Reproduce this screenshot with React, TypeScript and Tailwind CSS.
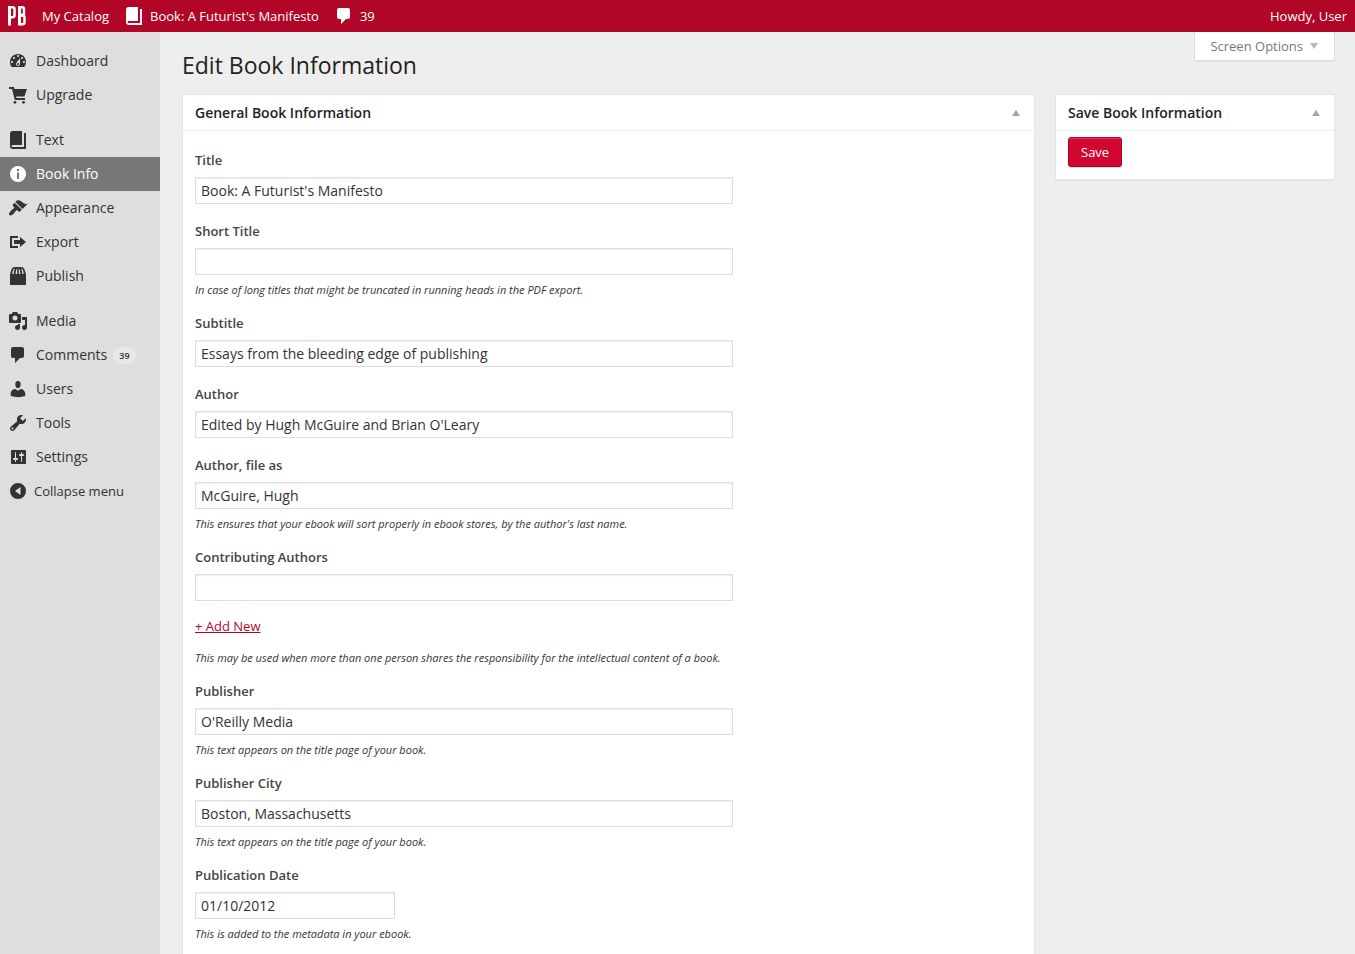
import { useId, useState, type ReactNode } from "react";

type IconProps = { children: ReactNode; className?: string };

function Icon({ children, className = "" }: IconProps) {
  return (
    <svg viewBox="0 0 20 20" className={`size-5 shrink-0 fill-current ${className}`} aria-hidden="true">
      {children}
    </svg>
  );
}

const icons = {
  dashboard: (
    <path
      fillRule="evenodd"
      d="M3.76 16h12.48c1.1-1.37 1.76-3.11 1.76-5 0-4.42-3.58-8-8-8s-8 3.58-8 8c0 1.89.66 3.63 1.76 5zM10 4c.55 0 1 .45 1 1s-.45 1-1 1-1-.45-1-1 .45-1 1-1zM6 6c.55 0 1 .45 1 1s-.45 1-1 1-1-.45-1-1 .45-1 1-1zm8 0c.55 0 1 .45 1 1s-.45 1-1 1-1-.45-1-1 .45-1 1-1zm-5.37 5.55L12 7v6c0 1.1-.9 2-2 2s-2-.9-2-2c0-.57.24-1.08.63-1.45zM4 10c.55 0 1 .45 1 1s-.45 1-1 1-1-.45-1-1 .45-1 1-1zm12 0c.55 0 1 .45 1 1s-.45 1-1 1-1-.45-1-1 .45-1 1-1zm-5 3c0-.55-.45-1-1-1s-1 .45-1 1 .45 1 1 1 1-.45 1-1z"
    />
  ),
  cart: (
    <>
      <path d="M1 2h4.800l.7 2H19l-2.600 7.500H8.100l.4 1.500H17v2H6.700L4.100 4H1z" />
      <circle cx="7" cy="17.300" r="1.400" />
      <circle cx="15.500" cy="17.300" r="1.400" />
    </>
  ),
  book: (
    <path d="M4.500 1H14v14H5c-.8 0-1.400.4-1.400 1s.6 1 1.400 1h11V3h2v16H5c-1.800 0-3-1.200-3-3V3.500C2 2 3 1 4.500 1z" />
  ),
  info: (
    <path
      fillRule="evenodd"
      d="M10 2a8 8 0 1 1 0 16 8 8 0 0 1 0-16zM9 5h2v2H9zM9 8.500h2V15H9z"
    />
  ),
  appearance: (
    <path d="M14.48 11.06L7.41 3.99l1.5-1.5c.5-.56 2.3-.47 3.51.32 1.21.8 1.43 1.28 2.91 2.1 1.18.64 2.45 1.26 4.45.85zm-.71.71L6.7 4.7 4.93 6.47c-.39.39-.39 1.02 0 1.41l1.06 1.06c.39.39.39 1.03 0 1.42-.6.6-1.43 1.11-2.21 1.69-.35.26-.7.53-1.01.84C1.43 14.23.4 16.08 1.4 17.07c.99 1 2.84-.03 4.18-1.36.31-.31.58-.66.85-1.02.57-.78 1.08-1.61 1.69-2.21.39-.39 1.02-.39 1.41 0l1.06 1.06c.39.39 1.02.39 1.41 0z" />
  ),
  export: (
    <>
      <path d="M2 4h8v2H4v8h6v2H2z" />
      <path d="M6 8h6V5l6 5-6 5v-3H6z" />
    </>
  ),
  publish: (
    <path
      fillRule="evenodd"
      d="M2 19V8.500l1-3.500c.6-2.600 1.700-4 4-4h6c2.300 0 3.400 1.400 4 4l1 3.500V19zM4.300 8h1.500c0-2.200.3-3.900 1.200-5.400C5.200 3 4.500 5 4.300 8zM7.600 8h1.600V2.600C8.200 3.500 7.700 5.500 7.600 8zM10.800 8h1.600c-.1-2.500-.6-4.500-1.600-5.400zM14.200 8h1.500c-.2-3-.9-5-2.700-5.400.9 1.500 1.200 3.200 1.200 5.400z"
    />
  ),
  media: (
    <path
      fillRule="evenodd"
      d="M13 11V4c0-.55-.45-1-1-1h-1.67L9 1H5L3.67 3H2c-.55 0-1 .45-1 1v7c0 .55.45 1 1 1h10c.55 0 1-.45 1-1zM7 4.5c1.38 0 2.5 1.12 2.5 2.5S8.38 9.5 7 9.5 4.5 8.38 4.5 7 5.62 4.5 7 4.5zM14 6h5v10.5c0 1.38-1.12 2.5-2.5 2.5S14 17.88 14 16.5s1.12-2.5 2.5-2.5c.17 0 .34.02.5.05V9h-3V6zm-4 8.05V13h2v3.5c0 1.38-1.12 2.5-2.5 2.5S7 17.88 7 16.5 8.12 14 9.5 14c.17 0 .34.02.5.05z"
    />
  ),
  comments: (
    <path d="M5 2h9c1.1 0 2 .9 2 2v7c0 1.1-.9 2-2 2h-2l-5 5v-5H5c-1.1 0-2-.9-2-2V4c0-1.1.9-2 2-2z" />
  ),
  users: (
    <path d="M10 9.25c-2.27 0-2.73-3.44-2.73-3.44C7 4.02 7.82 2 9.97 2c2.16 0 2.98 2.02 2.71 3.81 0 0-.41 3.44-2.68 3.44zm0 2.57L12.72 10c2.39 0 4.52 2.33 4.52 4.53v2.49s-3.65 1.13-7.24 1.13c-3.65 0-7.24-1.13-7.24-1.13v-2.49c0-2.25 1.94-4.48 4.47-4.48z" />
  ),
  tools: (
    <path
      fillRule="evenodd"
      d="M16.68 9.77c-1.34 1.34-3.3 1.67-4.95.99l-5.41 6.52c-.99.99-2.59.99-3.58 0s-.99-2.59 0-3.57l6.52-5.42c-.68-1.65-.35-3.61.99-4.95 1.28-1.28 3.12-1.62 4.72-1.06l-2.89 2.89 2.82 2.82 2.86-2.87c.53 1.58.18 3.39-1.08 4.65zM3.81 16.21c.4.39 1.04.39 1.43 0 .4-.4.4-1.04 0-1.43-.39-.4-1.03-.4-1.43 0-.39.39-.39 1.03 0 1.43z"
    />
  ),
  settings: (
    <path
      fillRule="evenodd"
      d="M4 3h13c.55 0 1 .45 1 1v12c0 .55-.45 1-1 1H4c-.55 0-1-.45-1-1V4c0-.55.45-1 1-1zM8 11h1c.55 0 1 .45 1 1s-.45 1-1 1H8v1.5c0 .28-.22.5-.5.5s-.5-.22-.5-.5V13H6c-.55 0-1-.45-1-1s.45-1 1-1h1V5.5c0-.28.22-.5.5-.5s.5.22.5.5V11zm5-2h-1c-.55 0-1-.45-1-1s.45-1 1-1h1V5.5c0-.28.22-.5.5-.5s.5.22.5.5V7h1c.55 0 1 .45 1 1s-.45 1-1 1h-1v5.5c0 .28-.22.5-.5.5s-.5-.22-.5-.5V9z"
    />
  ),
  collapse: (
    <path fillRule="evenodd" d="M10 2a8 8 0 1 1 0 16 8 8 0 0 1 0-16zM12.500 6v8l-5.500-4z" />
  ),
};

type IconName = keyof typeof icons;

const menuGroups: { label: string; icon: IconName; count?: number }[][] = [
  [
    { label: "Dashboard", icon: "dashboard" },
    { label: "Upgrade", icon: "cart" },
  ],
  [
    { label: "Text", icon: "book" },
    { label: "Book Info", icon: "info" },
    { label: "Appearance", icon: "appearance" },
    { label: "Export", icon: "export" },
    { label: "Publish", icon: "publish" },
  ],
  [
    { label: "Media", icon: "media" },
    { label: "Comments", icon: "comments", count: 39 },
    { label: "Users", icon: "users" },
    { label: "Tools", icon: "tools" },
    { label: "Settings", icon: "settings" },
  ],
];

function Logo() {
  return (
    <svg viewBox="0 0 18 20" className="h-5 w-[18px]" role="img" aria-label="PB">
      <g fill="none" stroke="white" strokeWidth="2.500">
        <rect x="1.500" y="1.250" width="5" height="10" rx="2" />
        <rect x="11.500" y="1.250" width="4.500" height="7.750" rx="2" />
        <rect x="11.500" y="9.500" width="5" height="8.750" rx="2" />
      </g>
      <rect x="0" y="0" width="3" height="19.500" fill="white" />
      <rect x="10" y="0" width="3" height="19.500" fill="white" />
    </svg>
  );
}

function TopBar() {
  return (
    <header className="flex h-8 items-center bg-[#b10628] px-2 text-[13px] text-white">
      <a href="#home">
        <Logo />
      </a>
      <a href="#catalog" className="ml-4 pt-0.5">
        My Catalog
      </a>
      <a href="#book" className="ml-[15px] flex items-center gap-[6px]">
        <Icon>{icons.book}</Icon>
        <span className="pt-0.5">Book: A Futurist's Manifesto</span>
      </a>
      <a href="#comments" className="ml-[15px] flex items-center gap-[6px]">
        <Icon>{icons.comments}</Icon>
        <span className="pt-0.5">39</span>
      </a>
      <a href="#profile" className="ml-auto pt-0.5">
        Howdy, User
      </a>
    </header>
  );
}

function Sidebar() {
  return (
    <nav className="w-40 shrink-0 bg-[#dedede] pt-3 text-sm text-[#333]">
      {menuGroups.map((group, i) => (
        <ul key={i} className="mb-[11px] last-of-type:mb-0">
          {group.map(({ label, icon, count }) => (
            <li key={label}>
              <a
                href="#menu"
                aria-current={label === "Book Info" ? "page" : undefined}
                className="flex h-[34px] items-center px-2 aria-[current=page]:bg-[#777] aria-[current=page]:text-white"
              >
                <Icon className="mr-2">{icons[icon]}</Icon>
                {label}
                {count && (
                  <span className="ml-[6px] rounded-full bg-[#e8e8e8] px-[6px] text-[9px] leading-[17px] font-semibold">
                    {count}
                  </span>
                )}
              </a>
            </li>
          ))}
        </ul>
      ))}
      <button type="button" className="flex h-[34px] items-center gap-[6px] px-2 text-[13px]">
        <Icon>{icons.collapse}</Icon>
        Collapse menu
      </button>
    </nav>
  );
}

type PanelProps = { title: string; className?: string; children: ReactNode };

function Panel({ title, className = "", children }: PanelProps) {
  return (
    <section className={`border border-[#e5e5e5] bg-white shadow-[0_1px_1px_rgba(0,0,0,0.04)] ${className}`}>
      <div className="flex h-9 items-center justify-between border-b border-[#eee] px-3">
        <h2 className="text-sm font-semibold text-[#222]">{title}</h2>
        <button type="button" aria-label={`Toggle ${title}`} className="px-[2px] text-[#a0a5aa]">
          <svg viewBox="0 0 8 6" className="h-[6px] w-2 fill-current" aria-hidden="true">
            <path d="M4 0l4 6H0z" />
          </svg>
        </button>
      </div>
      {children}
    </section>
  );
}

type FieldProps = { label: string; value?: string; hint?: string; short?: boolean; children?: ReactNode };

function Field({ label, value = "", hint, short, children }: FieldProps) {
  const id = useId();
  const [text, setText] = useState(value);
  return (
    <div className="pb-[14px]">
      <label htmlFor={id} className="block text-[13px] leading-5 font-semibold text-[#444]">
        {label}
      </label>
      <input
        id={id}
        type="text"
        value={text}
        onChange={(e) => setText(e.target.value)}
        className={`mt-[7px] mb-[3px] block h-[27px] border border-[#ddd] bg-white px-[5px] text-sm text-[#333] shadow-[inset_0_1px_2px_rgba(0,0,0,0.07)] ${short ? "w-[200px]" : "w-[65%]"}`}
      />
      {children}
      {hint && <p className="pt-[3px] text-[11px] leading-[18px] text-[#333] italic">{hint}</p>}
    </div>
  );
}

export default function App() {
  return (
    <div className="flex min-h-screen flex-col bg-[#eee] font-['Open_Sans',sans-serif]">
      <TopBar />
      <div className="flex flex-1">
        <Sidebar />
        <main className="flex min-w-0 flex-1 flex-col pr-5 pl-[22px]">
          <div className="flex h-[62px] items-start justify-between">
            <h1 className="pt-[17px] text-[23px] leading-8 text-[#222]">Edit Book Information</h1>
            <button
              type="button"
              className="flex h-[29px] items-center gap-[7px] border border-t-0 border-[#ddd] bg-white pr-4 pl-[15px] text-[13px] text-[#777] shadow-[0_1px_1px_-1px_rgba(0,0,0,0.3)]"
            >
              <span className="pt-0.5">Screen Options</span>
              <svg viewBox="0 0 8 6" className="h-[6px] w-2 fill-[#b4b9be]" aria-hidden="true">
                <path d="M4 6L0 0h8z" />
              </svg>
            </button>
          </div>
          <form className="flex flex-1 items-start gap-5" onSubmit={(e) => e.preventDefault()}>
            <Panel title="General Book Information" className="min-w-0 flex-1 self-stretch border-b-0">
              <div className="px-3 pt-[19px]">
                <Field label="Title" value="Book: A Futurist's Manifesto" />
                <Field
                  label="Short Title"
                  hint="In case of long titles that might be truncated in running heads in the PDF export."
                />
                <Field label="Subtitle" value="Essays from the bleeding edge of publishing" />
                <Field label="Author" value="Edited by Hugh McGuire and Brian O'Leary" />
                <Field
                  label="Author, file as"
                  value="McGuire, Hugh"
                  hint="This ensures that your ebook will sort properly in ebook stores, by the author's last name."
                />
                <Field
                  label="Contributing Authors"
                  hint="This may be used when more than one person shares the responsibility for the intellectual content of a book."
                >
                  <div className="pt-3 pb-[10px] text-[13px] leading-5">
                    <a href="#add" className="text-[#b10628] underline">
                      + Add New
                    </a>
                  </div>
                </Field>
                <Field
                  label="Publisher"
                  value="O'Reilly Media"
                  hint="This text appears on the title page of your book."
                />
                <Field
                  label="Publisher City"
                  value="Boston, Massachusetts"
                  hint="This text appears on the title page of your book."
                />
                <Field
                  label="Publication Date"
                  value="01/10/2012"
                  short
                  hint="This is added to the metadata in your ebook."
                />
              </div>
            </Panel>
            <Panel title="Save Book Information" className="w-[280px] shrink-0">
              <div className="px-3 pt-[6px] pb-3">
                <button
                  type="submit"
                  className="block h-[30px] rounded-[3px] border border-[#a80527] bg-[#d10631] px-3 pt-0.5 text-[13px] text-white shadow-[inset_0_1px_0_#f0305a,0_1px_0_rgba(0,0,0,0.15)]"
                >
                  Save
                </button>
              </div>
            </Panel>
          </form>
        </main>
      </div>
    </div>
  );
}
